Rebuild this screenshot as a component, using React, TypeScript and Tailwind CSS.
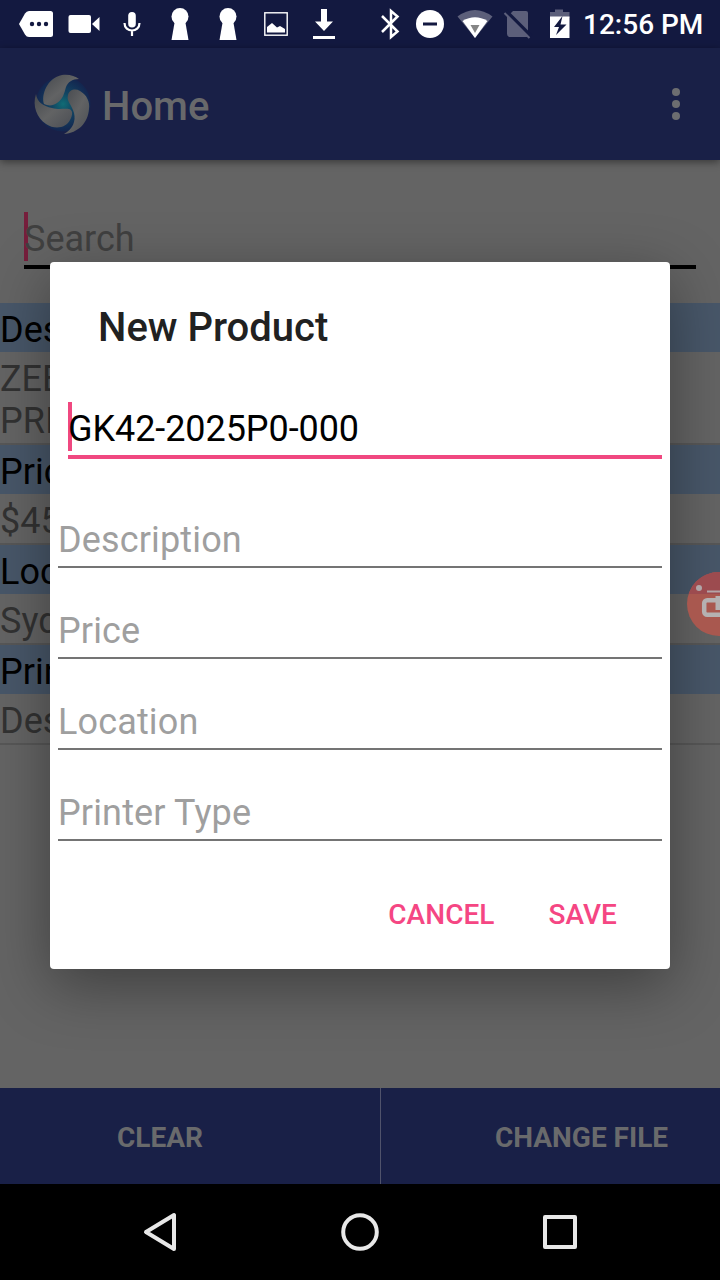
import type { ReactNode } from "react";

const listItems = [
  { label: "Des", lines: ["ZEB", "PRI"] },
  { label: "Pric", lines: ["$45"] },
  { label: "Loc", lines: ["Syd"] },
  { label: "Prin", lines: ["Des"] },
];

const dialogFields = ["Description", "Price", "Location", "Printer Type"];

function Glyph({ width, children }: { width: number; children: ReactNode }) {
  return (
    <svg width={width} height="48" viewBox={`0 0 ${width} 48`} fill="#fff" className="shrink-0">
      {children}
    </svg>
  );
}

function KeyholeGlyph() {
  return (
    <Glyph width={48}>
      <circle cx="24" cy="16.5" r="8.5" />
      <path d="M19 20h10l3.500 20h-17z" />
    </Glyph>
  );
}

function StatusBar() {
  return (
    <header className="flex h-12 items-center bg-[#131940] pl-3 text-white">
      <Glyph width={48}>
        <path d="M7 24 13 13.500Q14.500 11 17 11H38.500Q41 11 41 13.500V34.500Q41 37 38.500 37H17Q14.500 37 13 34.500Z" />
        <g fill="#131940">
          <circle cx="20" cy="24" r="2.200" />
          <circle cx="27" cy="24" r="2.200" />
          <circle cx="34" cy="24" r="2.200" />
        </g>
      </Glyph>
      <Glyph width={48}>
        <rect x="8.500" y="15" width="22.500" height="18" rx="2" />
        <path d="M32 24l7.500-7v14z" />
      </Glyph>
      <Glyph width={48}>
        <rect x="20.200" y="12" width="7.600" height="15.500" rx="3.800" />
        <path d="M16.500 23c0 10 15 10 15 0M24 30.500V36" fill="none" stroke="#fff" strokeWidth="2.200" />
      </Glyph>
      <KeyholeGlyph />
      <KeyholeGlyph />
      <Glyph width={48}>
        <rect x="12.800" y="12.800" width="22.400" height="22.400" fill="none" stroke="#fff" strokeWidth="1.400" />
        <path d="M15 32.500V27l5-4 5 4.500 3-1.500 5 3v3.500z" />
      </Glyph>
      <Glyph width={48}>
        <path d="M21 9h6v12.500h6L24 31l-9-9.500h6zM13 36h22v3H13z" />
      </Glyph>
      <div className="flex pl-6">
        <Glyph width={36}>
          <path d="M10 16 25.500 31.500 19 37V11l6.500 5.500L10 32" fill="none" stroke="#fff" strokeWidth="2.500" />
        </Glyph>
        <Glyph width={44}>
          <circle cx="22" cy="24" r="14" />
          <rect x="15" y="22.500" width="14" height="3" fill="#131940" />
        </Glyph>
        <Glyph width={44}>
          <path d="M5.500 16.500Q23 3.500 40.500 16.500L23 38z" fill="#5c5f7a" />
          <path d="M10.500 21Q23 13.500 35.500 21L23 38z" />
          <path d="M18.500 25h9L23 33z" fill="#858585" />
        </Glyph>
        <Glyph width={48}>
          <path d="M17 11h13q2 0 2 2v24H13q-2-1-2-3V17z" fill="#5c5f7a" />
          <path d="M10 11 35 36" stroke="#131940" strokeWidth="3.500" />
          <path d="M8.500 13 33.500 38" stroke="#5c5f7a" strokeWidth="2" />
        </Glyph>
        <Glyph width={36}>
          <path d="M6 12h5V9.500h8V12h6.500v6H6z" fill="#5c5f7a" />
          <path d="M6 16.500h19.500V38H6z" />
          <path d="M18.500 16 10 27h5l-3 8L22.500 24.500h-6z" fill="#131940" />
        </Glyph>
      </div>
      <span className="pt-0.5 pl-[3px] text-[28px] leading-8 font-medium whitespace-nowrap">12:56 PM</span>
    </header>
  );
}

function SwirlLogo() {
  return (
    <svg width="60" height="60" viewBox="0 0 60 60" className="shrink-0">
      <defs>
        <linearGradient id="silver" x1="0" y1="0" x2="1" y2="1">
          <stop offset="0" stopColor="#46494e" />
          <stop offset="0.5" stopColor="#626364" />
          <stop offset="1" stopColor="#4b4e54" />
        </linearGradient>
        <radialGradient id="core">
          <stop offset="0" stopColor="#116c75" />
          <stop offset="0.4" stopColor="#124562" />
          <stop offset="1" stopColor="#13254f" />
        </radialGradient>
      </defs>
      <circle cx="31" cy="30" r="27.500" fill="url(#core)" />
      <g fill="url(#silver)">
        <path d="M12 30C9 21 15 4 30 1c7-1 13 1 17 4-7 0-11 3-13 8-2 7-3 12-9 16-4 3-9 3-13 1z" />
        <path d="M36 21c1-5 7-7 12-4 7 4 10 11 9 18-1 14-11 24-25 25 9-5 12-13 10-21-2-8-8-12-6-18z" />
        <path d="M4 20c-4 12 1 24 10 30 9 6 20 4 24-4 3-5 3-10-1-11-5-1-9 1-17-1C11 32 5 28 4 20z" />
      </g>
    </svg>
  );
}

function AppBar() {
  return (
    <div className="z-0 flex h-28 items-center bg-[#192047] px-8 shadow-[0_2px_8px_rgba(0,0,0,0.45)]">
      <SwirlLogo />
      <h1 className="ml-2.5 pt-1 text-[40px] leading-[47px] font-medium text-[#68696b]">Home</h1>
      <svg width="8" height="32" viewBox="0 0 8 32" fill="#6c6d70" className="mr-2 ml-auto">
        <circle cx="4" cy="4" r="4" />
        <circle cx="4" cy="16" r="4" />
        <circle cx="4" cy="28" r="4" />
      </svg>
    </div>
  );
}

function NewProductDialog() {
  return (
    <div
      role="dialog"
      className="absolute top-[262px] left-[50px] h-[707px] w-[620px] rounded bg-white px-2 pt-[42px] shadow-[0_16px_60px_rgba(0,0,0,0.38)]"
    >
      <h2 className="pl-10 text-[40px] leading-[47px] font-medium text-[#212121]">New Product</h2>
      {/* focused field */}
      <div className="relative mt-[51px] ml-2.5 h-[57px] border-b-4 border-[#f04880] pt-[6px] text-[36px] leading-[42px] tracking-[-0.07px] text-black">
        <span className="absolute top-0 left-0 h-[49px] w-1 bg-[#f04880]" />
        <span className="relative">GK42-2025P0-000</span>
      </div>
      <div className="mt-[18px]">
        {dialogFields.map((field) => (
          <div
            key={field}
            className="h-[91px] border-b-2 border-[#747474] pt-[42px] text-[36px] leading-[42px] tracking-[0.15px] text-[#9f9f9f]"
          >
            {field}
          </div>
        ))}
      </div>
      <div className="mt-[57px] flex justify-end gap-[54px] pr-[45px] text-[28px] leading-[33px] font-medium tracking-[0.05px] text-[#f54683]">
        <button>CANCEL</button>
        <button>SAVE</button>
      </div>
    </div>
  );
}

function RecorderBubble() {
  return (
    <div className="absolute top-[572px] right-0 h-16 w-[33px] overflow-hidden">
      <svg width="64" height="64" viewBox="0 0 64 64">
        <circle cx="32" cy="32" r="32" fill="#a9584f" />
        <path d="M5.200 14.500A32 32 0 0 1 58.800 14.500L62 22H1.600z" fill="#9c4b4f" />
        <circle cx="12" cy="16" r="3" fill="#b0a6a8" />
        <path d="M20 19.500h20" stroke="#b3a5a7" strokeWidth="2" />
        <rect x="17.200" y="28.200" width="26" height="14.600" rx="3" fill="none" stroke="#b5b1b1" strokeWidth="4.500" />
        <path d="M31 24v14" stroke="#b5b1b1" strokeWidth="5" />
      </svg>
    </div>
  );
}

export default function App() {
  return (
    <div className="relative flex h-[1280px] w-[720px] flex-col overflow-hidden bg-[#646464] font-['Roboto',sans-serif]">
      <StatusBar />
      <AppBar />
      <main className="flex-1">
        <div className="relative mx-6 mt-[52px] h-[57px] border-b-4 border-black pt-[6px] text-[36px] leading-[42px] text-[#404040]">
          <span className="absolute top-0 left-0 h-[49px] w-1 bg-[#761e3c]" />
          <span className="relative">Search</span>
        </div>
        <ul className="mt-[34px] text-[36px] leading-[42px]">
          {listItems.map((item) => (
            <li key={item.label} className="border-b-2 border-[#575757]">
              <div className="h-[49px] bg-[#485769] pt-[6px] text-black">
                <p className="w-[50px] overflow-hidden">{item.label}</p>
              </div>
              <div className="pt-[6px] pb-px text-[#323232]">
                {item.lines.map((line) => (
                  <p key={line} className="w-[50px] overflow-hidden">
                    {line}
                  </p>
                ))}
              </div>
            </li>
          ))}
        </ul>
      </main>
      <footer className="flex h-24 bg-[#192047] text-[28px] font-bold text-[#696a6c]">
        <button className="w-[381px] border-r border-[#50536b] pt-1 pr-[60px]">CLEAR</button>
        <button className="flex-1 pt-1 pl-[62px]">CHANGE FILE</button>
      </footer>
      <nav className="flex h-24 items-center justify-center bg-black">
        <svg width="440" height="48" viewBox="0 0 440 48" fill="none" stroke="#e8e8e8" strokeWidth="4" strokeLinejoin="round">
          <path d="M6 24 34 7v34z" />
          <circle cx="220" cy="24" r="16.800" />
          <rect x="405" y="9" width="30" height="30" />
        </svg>
      </nav>
      <NewProductDialog />
      <RecorderBubble />
    </div>
  );
}
